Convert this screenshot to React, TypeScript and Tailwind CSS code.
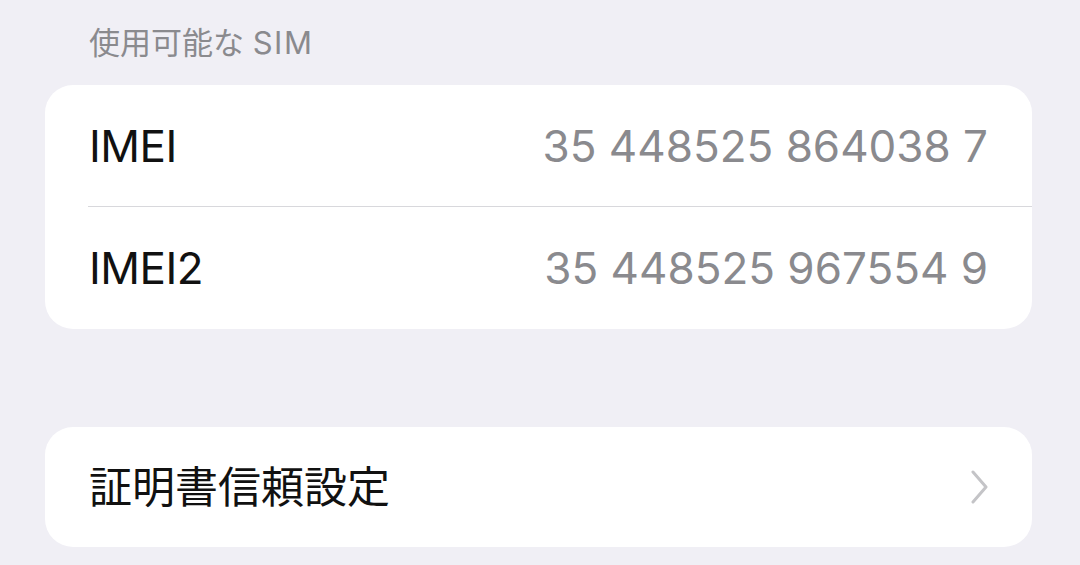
import React from 'react';

const font = { fontFamily: 'Inter, "Noto Sans CJK JP", sans-serif' };

const Chevron = () => (
  <svg width="22" height="34" viewBox="0 0 22 34" fill="none" stroke="#c4c4c7" strokeWidth={3} strokeLinecap="round" strokeLinejoin="round">
    <polyline points="5,2 18,17 5,32" />
  </svg>
);

const InfoRow = ({ label, value, divider }: { label: string; value: string; divider?: boolean }) => (
  <div className="relative flex items-center justify-between h-[122px] pl-[44px] pr-[44px]">
    <span className="text-[44px] text-[#111] tracking-[-0.5px]">{label}</span>
    <span className="text-[44px] text-[#8a8a8e]">{value}</span>
    {divider && <div className="absolute left-[43px] right-0 bottom-0 h-px bg-[#d8d8dc]" />}
  </div>
);

export default function App() {
  return (
    <div className="w-[1080px] h-[565px] bg-[#f0eff5] overflow-hidden" style={font}>
      <div className="px-[45px] pr-[48px]">
        <div className="h-[85px] pt-[23px] pl-[44px] text-[31px] leading-[40px] text-[#8a8a8e]">
          使用可能な <span className="tracking-[1.5px]">SIM</span>
        </div>

        <div className="bg-white rounded-[28px] overflow-hidden">
          <InfoRow label="IMEI" value="35 448525 864038 7" divider />
          <InfoRow label="IMEI2" value="35 448525 967554 9" />
        </div>

        <div className="mt-[98px] bg-white rounded-[28px] h-[120px] flex items-center justify-between pl-[44px] pr-[42px]">
          <span className="text-[43px] text-[#111]">証明書信頼設定</span>
          <Chevron />
        </div>
      </div>
    </div>
  );
}
